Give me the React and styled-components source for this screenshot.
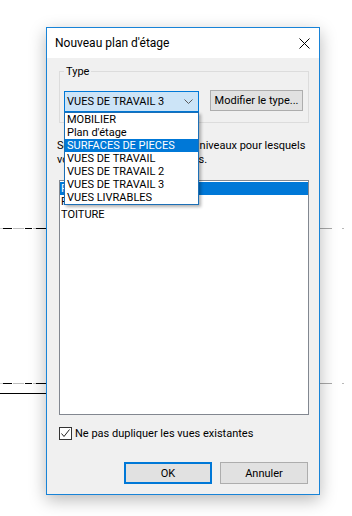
import React from 'react'
import styled, { createGlobalStyle } from 'styled-components'

const GlobalStyle = createGlobalStyle`
  html, body {
    margin: 0;
    padding: 0;
    background: #ffffff;
  }
  body {
    font-family: Roboto, "Liberation Sans", Arial, sans-serif;
    font-size: 11px;
    color: #000;
  }
`

const typeOptions = [
  'MOBILIER',
  "Plan d'étage",
  'SURFACES DE PIECES',
  'VUES DE TRAVAIL',
  'VUES DE TRAVAIL 2',
  'VUES DE TRAVAIL 3',
  'VUES LIVRABLES',
]

const levels = ['FONDATIONS', 'RDC', 'TOITURE']

// the CAD drawing that shows behind the dialog
function Backdrop() {
  const dashes = [
    [0, 3, '#d0d0d0'],
    [3, 12, '#000'],
    [13, 24, '#bdbdbd'],
    [25, 32, '#000'],
    [33, 36, '#bdbdbd'],
    [36, 46, '#000'],
  ]
  const row = (y) => (
    <g key={y}>
      {dashes.map(([a, b, c]) => (
        <line key={a} x1={a} x2={b} y1={y} y2={y} stroke={c} strokeWidth="1" />
      ))}
      <line x1="320" x2="332" y1={y} y2={y} stroke="#a8a8a8" strokeWidth="1" />
      <line x1="342" x2="344" y1={y} y2={y} stroke="#b8b8b8" strokeWidth="1" />
    </g>
  )
  return (
    <Drawing width="352" height="516" viewBox="0 0 352 516">
      {row(228.5)}
      {row(383.5)}
      <line x1="0" x2="46" y1="393.5" y2="393.5" stroke="#000" strokeWidth="1" />
    </Drawing>
  )
}

function App() {
  return (
    <Screen>
      <GlobalStyle />
      <Backdrop />
      <Dialog>
        <TitleBar>
          <Title>Nouveau plan d'étage</Title>
          <CloseButton>
            <svg width="11" height="11" viewBox="0 0 11 11">
              <path d="M0.5 0.5 L10.5 10.5 M10.5 0.5 L0.5 10.5" stroke="#000" strokeWidth="1" fill="none" />
            </svg>
          </CloseButton>
        </TitleBar>

        <Body>
          <GroupBox>
            <Legend>Type</Legend>
            <TypeRow>
              <ComboWrap>
                <Combo>
                  <span>VUES DE TRAVAIL 3</span>
                  <svg width="9" height="5" viewBox="0 0 9 5">
                    <polyline points="0.5,0.5 4.5,4.5 8.5,0.5" stroke="#5a5a5a" strokeWidth="1" fill="none" />
                  </svg>
                </Combo>
                <DropList>
                  {typeOptions.map((opt) => (
                    <DropItem key={opt} $active={opt === 'SURFACES DE PIECES'}>
                      {opt}
                    </DropItem>
                  ))}
                </DropList>
              </ComboWrap>
              <PushButton $w={93}>Modifier le type...</PushButton>
            </TypeRow>
          </GroupBox>

          <Description>
            Sélectionnez un ou plusieurs niveaux pour lesquels
            <br />
            vous souhaitez créer des vues.
          </Description>

          <ListBox>
            {levels.map((lvl, i) => (
              <ListItem key={lvl} $selected={i === 0}>
                {lvl}
              </ListItem>
            ))}
          </ListBox>

          <CheckRow>
            <CheckBox>
              <svg width="11" height="11" viewBox="0 0 11 11">
                <polyline points="1.5,5.5 4,8.5 9.5,1.5" stroke="#222" strokeWidth="1" fill="none" />
              </svg>
            </CheckBox>
            <span>Ne pas dupliquer les vues existantes</span>
          </CheckRow>

          <Footer>
            <PushButton $w={88} $h={22} $default>OK</PushButton>
            <PushButton $w={88} $h={22}>Annuler</PushButton>
          </Footer>
        </Body>
      </Dialog>
    </Screen>
  )
}

export default App

const Screen = styled.div`
  position: relative;
  width: 352px;
  height: 516px;
  overflow: hidden;
  background: #ffffff;
  padding-top: 27px;
  box-sizing: border-box;
`

const Drawing = styled.svg`
  position: absolute;
  left: 0;
  top: 0;
`

const Dialog = styled.div`
  position: relative;
  margin-left: 46px;
  width: 274px;
  height: 468px;
  box-sizing: border-box;
  border: 1px solid #1883d7;
  background: #f0f0f0;
  box-shadow: 0 5px 16px rgba(0, 0, 0, 0.28);
  display: flex;
  flex-direction: column;
`

const TitleBar = styled.div`
  height: 30px;
  background: #ffffff;
  display: flex;
  align-items: center;
  justify-content: space-between;
  padding-left: 8px;
  padding-right: 9px;
`

const Title = styled.div`
  font-size: 12px;
  color: #000;
  margin-top: -1px;
`

const CloseButton = styled.div`
  width: 11px;
  height: 11px;
  display: flex;
  margin-top: 0px;
`

const Body = styled.div`
  flex: 1;
  display: flex;
  flex-direction: column;
  padding: 7px 10px 10px 10px;
`

const GroupBox = styled.fieldset`
  margin: 0 0 0 2px;
  width: 250px;
  box-sizing: border-box;
  border: 1px solid #dcdcdc;
  padding: 12px 4px 10px 4px;
  min-inline-size: 0;
`

const Legend = styled.legend`
  padding: 0 2px;
  line-height: 13px;
  font-size: 11px;
`

const TypeRow = styled.div`
  display: flex;
  align-items: flex-start;
  gap: 11px;
`

const ComboWrap = styled.div`
  position: relative;
  margin-top: 1px;
`

const Combo = styled.div`
  width: 135px;
  height: 21px;
  box-sizing: border-box;
  border: 1px solid #0078d7;
  background: #cce4f7;
  display: flex;
  align-items: center;
  justify-content: space-between;
  padding: 0 5px 0 2px;
  line-height: 13px;
`

const DropList = styled.div`
  position: absolute;
  left: 0;
  top: 100%;
  z-index: 2;
  width: 135px;
  box-sizing: border-box;
  border: 1px solid #1c6fb6;
  background: #ffffff;
  box-shadow: 2px 2px 3px rgba(0, 0, 0, 0.3);
`

const DropItem = styled.div`
  height: 13px;
  line-height: 13px;
  padding-left: 2px;
  white-space: nowrap;
  background: ${(p) => (p.$active ? '#0078d7' : 'transparent')};
  color: ${(p) => (p.$active ? '#ffffff' : '#000')};
`

const PushButton = styled.div`
  width: ${(p) => p.$w}px;
  height: ${(p) => p.$h || 21}px;
  box-sizing: border-box;
  border: ${(p) => (p.$default ? '2px solid #0078d7' : '1px solid #adadad')};
  background: #e1e1e1;
  display: flex;
  align-items: center;
  justify-content: center;
  white-space: nowrap;
  line-height: 13px;
`

const Description = styled.div`
  margin-top: 16px;
  line-height: 14px;
  white-space: nowrap;
`

const ListBox = styled.div`
  margin: 13px 0 0 2px;
  width: 250px;
  height: 235px;
  box-sizing: border-box;
  border: 1px solid #828790;
  background: #ffffff;
  padding-top: 1px;
`

const ListItem = styled.div`
  height: 13px;
  line-height: 13px;
  padding-left: 1px;
  background: ${(p) => (p.$selected ? '#0078d7' : 'transparent')};
  color: ${(p) => (p.$selected ? '#ffffff' : '#000')};
`

const CheckRow = styled.div`
  margin: 12px 0 0 2px;
  display: flex;
  align-items: center;
  gap: 3px;
`

const CheckBox = styled.div`
  width: 13px;
  height: 13px;
  box-sizing: border-box;
  border: 1px solid #333;
  background: #ffffff;
  display: flex;
  align-items: center;
  justify-content: center;
`

const Footer = styled.div`
  margin-top: auto;
  display: flex;
  justify-content: flex-end;
  gap: 8px;
  padding-right: 1px;
`
